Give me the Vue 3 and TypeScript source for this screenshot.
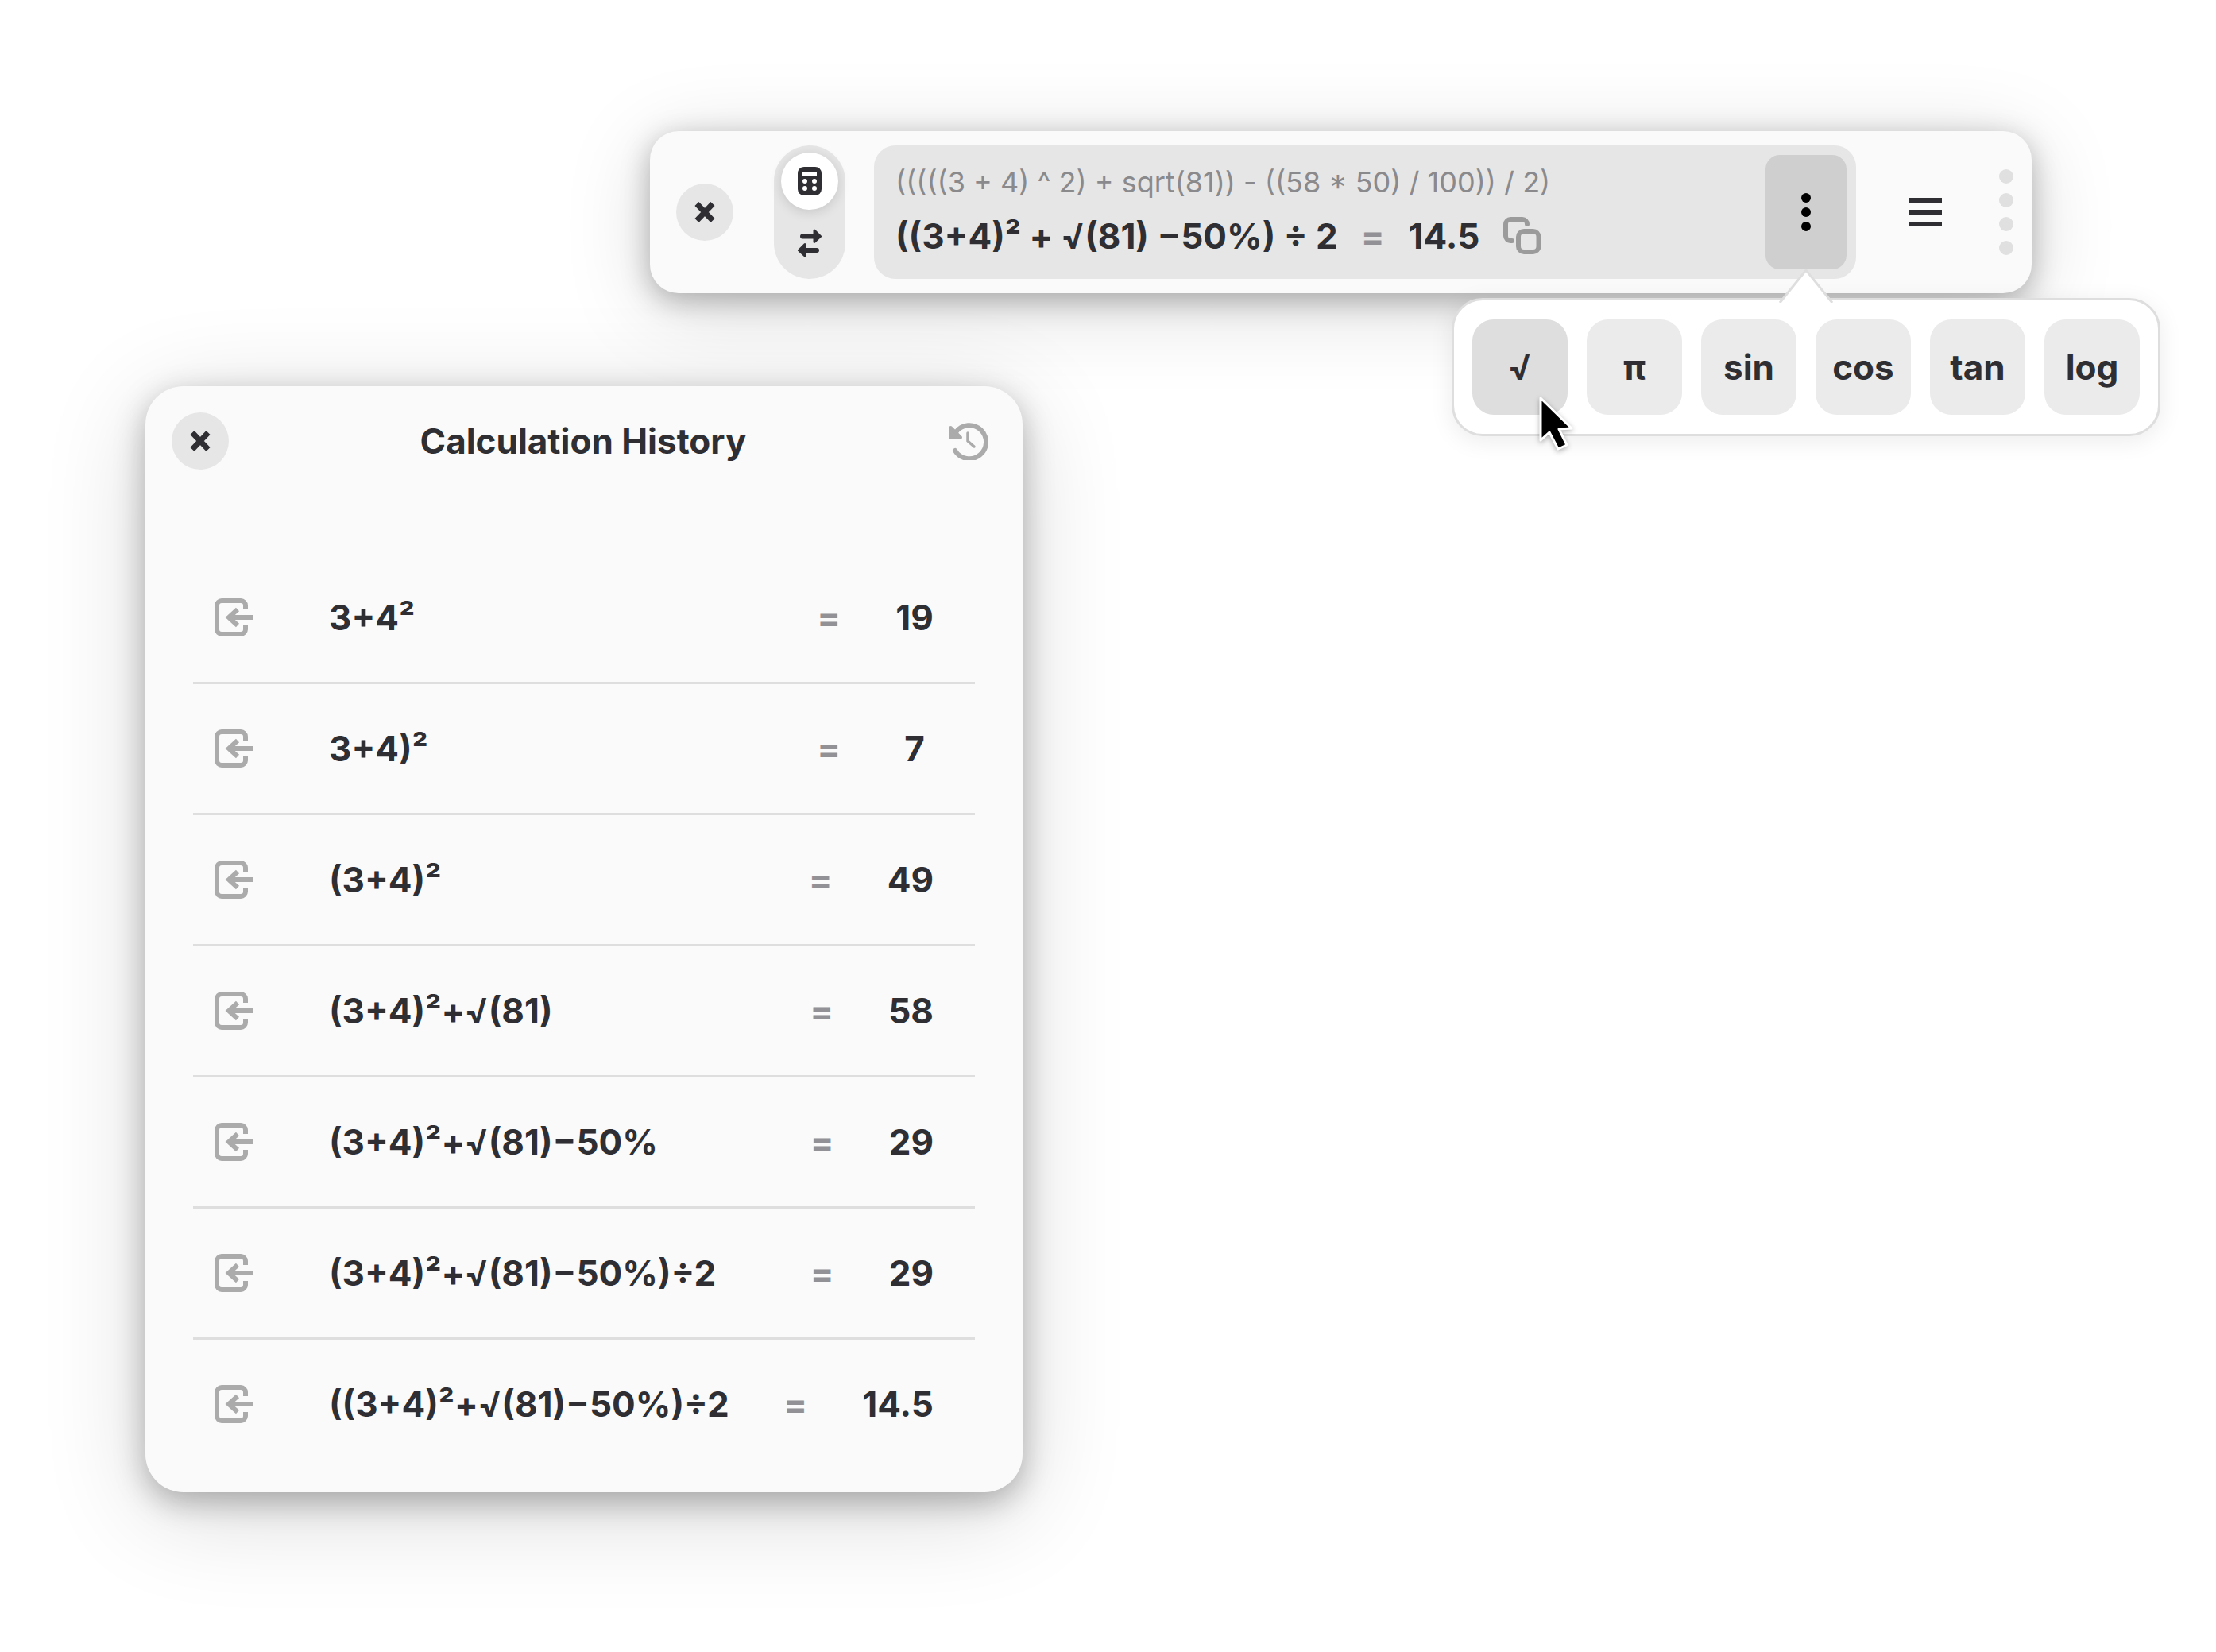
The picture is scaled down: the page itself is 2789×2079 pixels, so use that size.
<script setup lang="ts">
interface HistoryRow {
  expr: string;
  result: string;
}

const rows: HistoryRow[] = [
  { expr: '3+4²', result: '19' },
  { expr: '3+4)²', result: '7' },
  { expr: '(3+4)²', result: '49' },
  { expr: '(3+4)²+√(81)', result: '58' },
  { expr: '(3+4)²+√(81)−50%', result: '29' },
  { expr: '(3+4)²+√(81)−50%)÷2', result: '29' },
  { expr: '((3+4)²+√(81)−50%)÷2', result: '14.5' },
];

const functions = ['√', 'π', 'sin', 'cos', 'tan', 'log'];
</script>

<template>
  <div class="desktop">
    <!-- calculator bar -->
    <div class="bar">
      <button class="round close-btn">
        <svg width="26" height="26" viewBox="0 0 26 26"><path d="M3 2.5L23 23.5M23 2.5L3 23.5" /></svg>
      </button>
      <div class="mode-switch">
        <div class="mode active">
          <svg width="30" height="36" viewBox="0 0 30 36">
            <path
              fill-rule="evenodd"
              d="M8 0H22A8 8 0 0 1 30 8V28A8 8 0 0 1 22 36H8A8 8 0 0 1 0 28V8A8 8 0 0 1 8 0ZM6 6V12H24V6ZM9 15A3 3 0 1 0 9 21A3 3 0 1 0 9 15ZM21 15A3 3 0 1 0 21 21A3 3 0 1 0 21 15ZM9 24A3 3 0 1 0 9 30A3 3 0 1 0 9 24ZM21 24A3 3 0 1 0 21 30A3 3 0 1 0 21 24Z"
            />
          </svg>
        </div>
        <div class="mode">
          <svg width="30" height="36" viewBox="0 0 30 36">
            <path class="swap-line" d="M6 9.5H22M24 27H8" />
            <path class="swap-head" d="M21 2L28.5 9.5L21 16.5ZM9 19.5L1.5 27L9 34Z" />
          </svg>
        </div>
      </div>
      <div class="display">
        <div class="lines">
          <div class="parsed">(((((3 + 4) ^ 2) + sqrt(81)) - ((58 * 50) / 100)) / 2)</div>
          <div class="entry">
            <span>((3+4)² + √(81) −50%) ÷ 2</span>
            <span class="eq">=</span>
            <span class="value">14.5</span>
            <svg class="copy" width="48" height="48" viewBox="0 0 48 48">
              <path d="M11 30H9A6 6 0 0 1 3 24V9A6 6 0 0 1 9 3H24A6 6 0 0 1 30 9" />
              <rect x="19" y="18" width="25.5" height="26" rx="7" />
            </svg>
          </div>
        </div>
        <button class="kebab">
          <i></i><i></i><i></i>
        </button>
      </div>
      <button class="round menu-btn">
        <i></i><i></i><i></i>
      </button>
      <div class="grip">
        <i></i><i></i><i></i><i></i>
      </div>
    </div>

    <!-- functions popover -->
    <div class="popover">
      <svg class="arrow" width="70" height="42" viewBox="0 0 70 42">
        <path d="M2 42L35 1L68 42" />
      </svg>
      <button v-for="(fn, i) in functions" :key="fn" class="fn" :class="{ hover: i === 0 }">{{ fn }}</button>
    </div>

    <!-- history window -->
    <div class="panel">
      <div class="panel-head">
        <button class="round close-btn">
          <svg width="26" height="26" viewBox="0 0 26 26"><path d="M3 2.5L23 23.5M23 2.5L3 23.5" /></svg>
        </button>
        <div class="title">Calculation History</div>
        <svg class="history" width="50" height="48" viewBox="0 0 50 48">
          <path class="ring" d="M9 36A21 21 0 1 0 10 13" />
          <path class="hand" d="M25 14V24L33 31" />
          <path class="tip" d="M3.5 7V19.5H16Z" />
        </svg>
      </div>
      <div class="rows">
        <div v-for="row in rows" :key="row.expr" class="row">
          <svg class="recall" width="48" height="48" viewBox="0 0 48 48">
            <path d="M39 14V9A6 6 0 0 0 33 3H9A6 6 0 0 0 3 9V39A6 6 0 0 0 9 45H33A6 6 0 0 0 39 39V34" />
            <path d="M48 24H20M29 14L18 24L29 34" />
          </svg>
          <div class="expr">{{ row.expr }}</div>
          <div class="eq">=</div>
          <div class="result">{{ row.result }}</div>
        </div>
      </div>
    </div>

    <!-- pointer -->
    <svg class="cursor" width="52" height="72" viewBox="0 0 52 72">
      <path d="M3 3V56L14 46L25 67L36 62L26 42L42 41Z" />
    </svg>
  </div>
</template>

<style>
html,
body {
  background: #ffffff;
}
</style>

<style scoped>
.desktop {
  position: relative;
  width: 2789px;
  height: 2079px;
  overflow: hidden;
  background: #ffffff;
  font-family: Inter, "Noto Sans", sans-serif;
  color: #2e2e33;
}

button {
  border: none;
  padding: 0;
  font-family: inherit;
  color: inherit;
}

.bar {
  position: absolute;
  left: 818px;
  top: 165px;
  width: 1739px;
  height: 204px;
  box-sizing: border-box;
  display: flex;
  align-items: center;
  padding: 0 23px 0 33px;
  background: #fafafa;
  border-radius: 36px;
  box-shadow: 0 9px 36px rgba(0, 0, 0, 0.28), 0 18px 110px rgba(0, 0, 0, 0.15);
}

.round {
  width: 72px;
  height: 72px;
  flex: none;
  border-radius: 50%;
  display: flex;
  align-items: center;
  justify-content: center;
}

.close-btn {
  background: #e6e6e6;
}

.close-btn path {
  fill: none;
  stroke: #2e2e33;
  stroke-width: 7;
}

.mode-switch {
  width: 90px;
  height: 168px;
  flex: none;
  margin-left: 51px;
  box-sizing: border-box;
  padding: 9px;
  display: flex;
  flex-direction: column;
  gap: 6px;
  background: #e6e6e6;
  border-radius: 45px;
}

.mode {
  width: 72px;
  height: 72px;
  border-radius: 50%;
  display: flex;
  align-items: center;
  justify-content: center;
}

.mode.active {
  background: #ffffff;
  box-shadow: 0 3px 15px rgba(0, 0, 0, 0.14);
}

.mode path {
  fill: #2e2e33;
}

.mode .swap-line {
  fill: none;
  stroke: #2e2e33;
  stroke-width: 6;
  stroke-linecap: round;
}

.mode .swap-head {
  stroke: #2e2e33;
  stroke-width: 3;
  stroke-linejoin: round;
}

.display {
  width: 1236px;
  height: 168px;
  flex: none;
  margin-left: 36px;
  box-sizing: border-box;
  padding: 12px 12px 12px 27px;
  display: flex;
  align-items: stretch;
  background: #e6e6e6;
  border-radius: 27px;
}

.lines {
  flex: 1;
  display: flex;
  flex-direction: column;
  padding-top: 12px;
}

.parsed {
  font-size: 36px;
  line-height: 44px;
  color: #8a8a8d;
}

.entry {
  display: flex;
  align-items: center;
  height: 56px;
  margin-top: 18px;
  font-size: 44px;
  font-weight: 700;
}

.entry .eq {
  margin-left: 29px;
}

.value {
  margin-left: 30px;
}

.eq {
  color: #929296;
}

.copy {
  margin-left: 30px;
}

.copy path,
.copy rect {
  fill: none;
  stroke: #9b9b9b;
  stroke-width: 6;
  stroke-linecap: round;
}

.kebab {
  width: 102px;
  height: 144px;
  flex: none;
  display: flex;
  flex-direction: column;
  align-items: center;
  justify-content: center;
  gap: 6px;
  background: #cfcfcf;
  border-radius: 18px;
}

.kebab i {
  width: 12px;
  height: 12px;
  border-radius: 50%;
  background: #000000;
}

.menu-btn {
  margin-left: 51px;
  flex-direction: column;
  gap: 9px;
  background: transparent;
}

.menu-btn i {
  width: 42px;
  height: 6px;
  background: #2e2e33;
}

.grip {
  margin-left: 57px;
  display: flex;
  flex-direction: column;
  gap: 12px;
}

.grip i {
  width: 18px;
  height: 18px;
  border-radius: 50%;
  background: #e0e0e0;
}

.popover {
  position: absolute;
  left: 1827px;
  top: 375px;
  display: flex;
  gap: 24px;
  padding: 24px 23px;
  background: #ffffff;
  border: 3px solid #dedede;
  border-radius: 39px;
  box-shadow: 0 6px 30px rgba(0, 0, 0, 0.08);
}

.arrow {
  position: absolute;
  left: 408px;
  top: -39px;
}

.arrow path {
  fill: #ffffff;
  stroke: #dedede;
  stroke-width: 3;
}

.fn {
  width: 120px;
  height: 120px;
  background: #ebebeb;
  border-radius: 27px;
  font-size: 44px;
  font-weight: 700;
  text-align: center;
}

.fn.hover {
  background: #dedede;
}

.panel {
  position: absolute;
  left: 183px;
  top: 486px;
  width: 1104px;
  height: 1392px;
  box-sizing: border-box;
  padding: 33px 44px 0 33px;
  background: #fafafa;
  border-radius: 48px;
  box-shadow: 0 12px 39px rgba(0, 0, 0, 0.28), 0 24px 130px rgba(0, 0, 0, 0.16);
}

.panel-head {
  display: flex;
  align-items: center;
  height: 72px;
}

.title {
  flex: 1;
  margin-right: 13px;
  text-align: center;
  font-size: 44px;
  font-weight: 700;
}

.history path {
  fill: none;
  stroke: #ababab;
  stroke-linecap: round;
}

.history .ring {
  stroke-width: 6;
}

.history .hand {
  stroke-width: 3.5;
}

.history .tip {
  fill: #ababab;
  stroke-width: 4;
  stroke-linejoin: round;
}

.rows {
  margin: 105px 16px 0 27px;
}

.row {
  height: 162px;
  display: flex;
  align-items: center;
  padding: 0 52px 0 27px;
  border-bottom: 3px solid #dedede;
  font-size: 44px;
  font-weight: 700;
}

.row:last-child {
  border-bottom: none;
}

.recall {
  flex: none;
}

.recall path {
  fill: none;
  stroke: #ababab;
  stroke-width: 6;
}

.expr {
  flex: 1;
  margin-left: 96px;
}

.row .eq {
  margin-right: 69px;
}

.result {
  min-width: 48px;
  text-align: center;
}

.cursor {
  position: absolute;
  left: 1936px;
  top: 498px;
  filter: drop-shadow(0 2px 3px rgba(0, 0, 0, 0.3));
}

.cursor path {
  fill: #000000;
  stroke: #ffffff;
  stroke-width: 3;
  stroke-linejoin: round;
}
</style>
